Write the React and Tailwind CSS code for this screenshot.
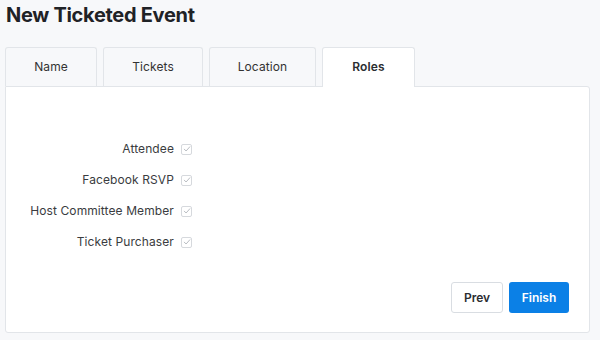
import React from "react";

function Check() {
  return (
    <span className="flex h-[11px] w-[11px] items-center justify-center rounded-[2px] border border-[#d6d9dd] bg-white">
      <svg width="8" height="8" viewBox="0 0 8 8" fill="none">
        <path d="M1.3 4.2 L3.1 6 L6.8 1.8" stroke="#b9bdc2" strokeWidth="1" strokeLinecap="round" strokeLinejoin="round" />
      </svg>
    </span>
  );
}

const tabs = [
  { label: "Name", w: "w-[92px]" },
  { label: "Tickets", w: "w-[100px]" },
  { label: "Location", w: "w-[107px]" },
];

const roles = ["Attendee", "Facebook RSVP", "Host Committee Member", "Ticket Purchaser"];

export default function App() {
  return (
    <div className="h-[340px] w-[600px] bg-[#f7f8fa] font-['Inter',sans-serif] text-[#2b2d31]">
      <h1 className="pl-[6px] pt-[3px] text-[20px] font-bold leading-[24px] tracking-[-0.3px] text-[#1f2226]">
        New Ticketed Event
      </h1>
      <div className="ml-[5px] mt-[20px] flex gap-[6px]">
        {tabs.map((t) => (
          <div
            key={t.label}
            className={`${t.w} flex h-[39px] items-center justify-center rounded-t-[3px] border border-b-0 border-[#e2e5e9] bg-[#f7f8fa] text-[12px] tracking-[0.1px] text-[#333]`}
          >
            {t.label}
          </div>
        ))}
        <div className="relative z-10 mb-[-1px] flex h-[40px] w-[93px] items-center justify-center rounded-t-[3px] border border-b-0 border-[#e2e5e9] bg-white pb-[1px] text-[12px] font-semibold tracking-[0.1px] text-[#2b2d31]">
          Roles
        </div>
      </div>
      <div className="ml-[5px] flex h-[247px] w-[585px] flex-col rounded-b-[3px] rounded-tr-[3px] border border-[#e2e5e9] bg-white">
        <div className="mt-[53px] flex w-[186px] flex-col items-end gap-[13px]">
          {roles.map((r) => (
            <div key={r} className="flex h-[18px] items-center gap-[7px]">
              <span className="text-[12px] tracking-[0.1px] text-[#3a3c40]">{r}</span>
              <Check />
            </div>
          ))}
        </div>
        <div className="mt-auto mb-[19px] mr-[20px] flex justify-end gap-[6px]">
          <button className="h-[31px] w-[52px] rounded-[3px] border border-[#d9dde2] bg-white text-[12px] font-semibold text-[#2b2d31]">
            Prev
          </button>
          <button className="h-[31px] w-[60px] rounded-[3px] bg-[#0b80e6] text-[12px] font-semibold text-white">
            Finish
          </button>
        </div>
      </div>
    </div>
  );
}
